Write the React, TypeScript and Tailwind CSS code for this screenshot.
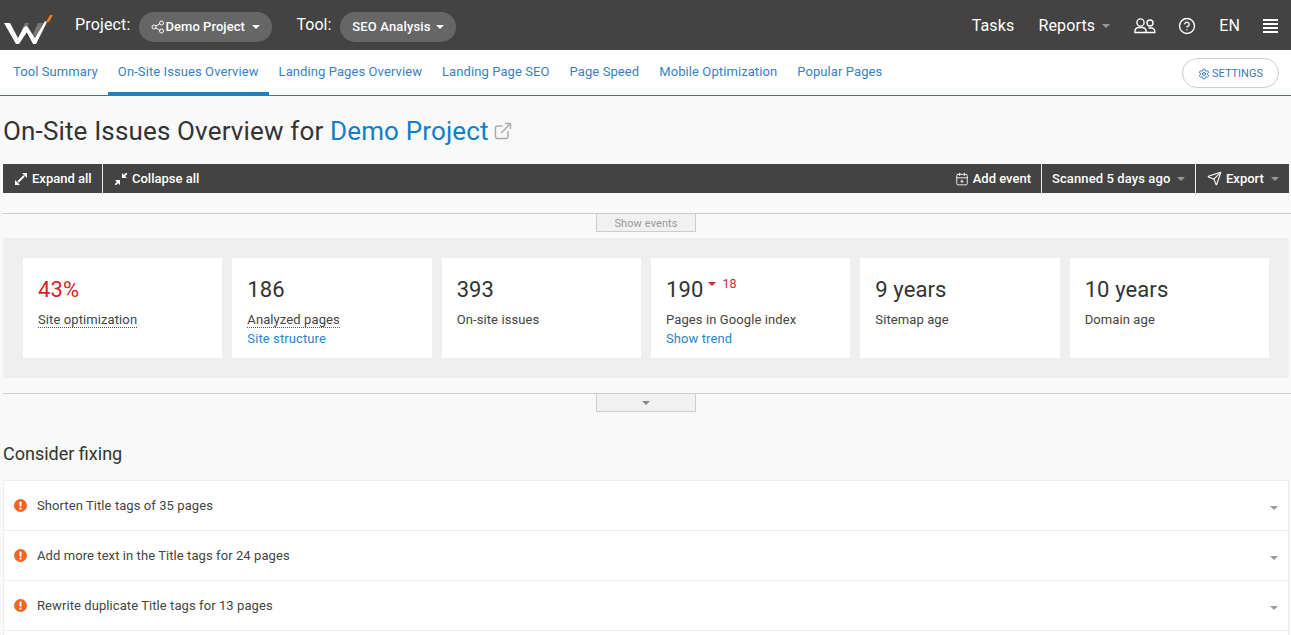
import React from 'react';
import { Settings, ExternalLink, CircleHelp, CalendarPlus2, Send } from 'lucide-react';

const Caret = ({ className = 'border-t-white' }: { className?: string }) => (
  <span className={`inline-block w-0 h-0 border-x-[4px] border-x-transparent border-t-[4px] ${className}`} />
);

const Logo = () => (
  <svg width="54" height="40" viewBox="0 0 54 40" className="block">
    <path d="M20 29 L25 18 L29 18 L23 32 Z" fill="#777" />
    <path d="M33 29 L38 18 L43 18 L36 32 Z" fill="#777" />
    <path d="M4 18 H10 L18 33 L24 22 L27 27 L19 39 H16 Z" fill="#fff" />
    <path d="M24 22 L27 21 L35 33 L45 16 L47 17 L36 39 H33 Z" fill="#fff" />
    <path d="M46 17 L50 10 H53 L49 17 Z" fill="#f47b20" />
  </svg>
);

const tabs = ['Tool Summary', 'On-Site Issues Overview', 'Landing Pages Overview', 'Landing Page SEO', 'Page Speed', 'Mobile Optimization', 'Popular Pages'];

const issues = ['Shorten Title tags of 35 pages', 'Add more text in the Title tags for 24 pages', 'Rewrite duplicate Title tags for 13 pages'];

const Stat = ({ value, label, link, dotted, red, delta }: { value: string; label: string; link?: string; dotted?: boolean; red?: boolean; delta?: string }) => (
  <div className="flex-1 bg-white h-[100px] pl-[15px] pt-[18px]">
    <div className="flex items-start h-[28px]">
      <span className={`text-[22px] leading-[28px] tracking-[0.1px] ${red ? 'text-[#d9222a]' : 'text-[#333]'}`}>{value}</span>
      {delta && (
        <span className="flex items-center ml-[5px] text-[12.5px] leading-[16px] text-[#d9222a]">
          <Caret className="border-t-[#d9222a] mr-[6px]" />
          {delta}
        </span>
      )}
    </div>
    <div className="mt-[6px] text-[13px] leading-[19px] tracking-[0.1px] text-[#444]">
      <span className={dotted ? 'border-b border-dotted border-[#555]' : ''}>{label}</span>
    </div>
    {link && <div className="text-[13px] leading-[19px] tracking-[0.1px] text-[#2a85c9]">{link}</div>}
  </div>
);

export default function App() {
  return (
    <div className="h-[635px] overflow-hidden bg-[#f9f9f9] font-['Roboto',sans-serif]">
      {/* top bar */}
      <header className="h-[50px] bg-[#434343] flex items-center text-white">
        <div className="w-[75px] shrink-0"><Logo /></div>
        <span className="text-[16px] tracking-[0.15px]">Project:</span>
        <button className="ml-[9px] mt-[4px] h-[30px] w-[133px] rounded-full bg-[#666] flex items-center pl-[12px] text-[13px] font-medium tracking-[0.05px]">
          <svg width="14" height="14" viewBox="0 0 14 14" fill="none" stroke="#fff" strokeWidth="1">
            <circle cx="3" cy="7" r="2" />
            <circle cx="10.5" cy="3" r="2" />
            <circle cx="10.5" cy="11" r="2" />
            <path d="M4.8 6L8.7 4M4.8 8l3.9 2" />
          </svg>
          Demo Project
          <Caret className="ml-[7px]" />
        </button>
        <span className="ml-[24px] text-[16px]">Tool:</span>
        <button className="ml-[9px] mt-[4px] h-[30px] w-[116px] rounded-full bg-[#666] flex items-center pl-[12px] text-[13px] font-medium tracking-[0.15px]">
          SEO Analysis
          <Caret className="ml-[5px]" />
        </button>
        <div className="ml-auto pt-[1px] flex items-center text-[16px] tracking-[0.15px]">
          <span>Tasks</span>
          <span className="ml-[24px]">Reports</span>
          <Caret className="ml-[7px] border-t-[#999]" />
          <svg width="22" height="17" viewBox="0 0 22 17" className="ml-[24px] -mt-[1px]" fill="none" stroke="#fff" strokeWidth="1.4">
            <circle cx="6.5" cy="5.5" r="3.6" />
            <path d="M1 15.5v-1.5A3.5 3.5 0 0 1 4.5 10.5h4A3.5 3.5 0 0 1 12 14v1.5Z" />
            <circle cx="16" cy="6" r="3" />
            <path d="M14.5 11h2.5A3.5 3.5 0 0 1 20.8 14.2v1.3H12" />
          </svg>
          <CircleHelp size={18} strokeWidth={1.8} className="ml-[22px]" />
          <span className="ml-[23px]">EN</span>
          <span className="ml-[23px] mr-[13px] w-[15px] h-[14px] flex flex-col justify-between">
            <i className="block h-[2px] bg-white" />
            <i className="block h-[2px] bg-white" />
            <i className="block h-[2px] bg-white" />
            <i className="block h-[2px] bg-white" />
          </span>
        </div>
      </header>

      {/* tabs */}
      <nav className="h-[46px] bg-white border-b border-[#2f7cb0] flex items-stretch pl-[3px] pr-[12px] text-[13px] text-[#3a7fc0]">
        {tabs.map((t, i) => (
          <a key={t} className={`px-[10px] pt-[12px] tracking-[0.09px] ${i === 1 ? 'border-b-[3px] border-[#1f80c0]' : ''}`}>{t}</a>
        ))}
        <button className="ml-auto self-center h-[30px] w-[97px] rounded-full border border-[#ccc] flex items-center justify-center pt-[3px] text-[11px] text-[#2f7cb8]">
          <Settings size={12} className="mr-[2px]" />
          SETTINGS
        </button>
      </nav>

      <main className="pl-[3px] pr-[2px]">
        <h1 className="mt-[18px] h-[34px] flex items-center text-[26px] tracking-[0.15px] text-[#333] leading-[34px]">
          On-Site Issues Overview for&nbsp;<span className="text-[#0f7fc7]">Demo Project</span>
          <ExternalLink size={20} strokeWidth={1.75} className="ml-[4px] text-[#aaa]" />
        </h1>

        {/* toolbar */}
        <div className="mt-[16px] h-[29px] bg-[#434343] text-white text-[13px] font-medium flex items-stretch whitespace-nowrap">
          <span className="flex items-center pl-[12px] border-r border-[#eee] w-[100px]">
            <svg width="12" height="12" viewBox="0 0 12 12" className="mr-[5px] shrink-0" fill="#fff">
              <path d="M3 9L9 3" stroke="#fff" strokeWidth="1.8" />
              <path d="M12 0V5L7 0ZM0 12V7L5 12Z" />
            </svg>
            Expand all
          </span>
          <span className="flex items-center pl-[12px]">
            <svg width="12" height="12" viewBox="0 0 12 12" className="mr-[5px] shrink-0" fill="#fff">
              <path d="M0 12L4 8M8 4L12 0" stroke="#fff" strokeWidth="1.8" />
              <path d="M7 5H12L7 0ZM5 7H0L5 12Z" />
            </svg>
            Collapse all
          </span>
          <span className="ml-auto flex items-center pr-[10px] border-r border-[#eee]">
            <CalendarPlus2 size={14} strokeWidth={1.5} className="mr-[4px]" />
            Add event
          </span>
          <span className="flex items-center pl-[10px] w-[154px] tracking-[0.1px] border-r border-[#eee]">
            Scanned 5 days ago
            <Caret className="ml-[7px] border-t-[#999]" />
          </span>
          <span className="flex items-center pl-[11px] w-[93px]">
            <Send size={15} strokeWidth={1.75} className="mr-[4px]" />
            Export
            <Caret className="ml-[7px] border-t-[#999]" />
          </span>
        </div>

        {/* events toggle */}
        <div className="mt-[20px] h-[19px] border-t border-[#ccc] -mr-[2px] flex justify-center pr-[2px]">
          <div className="w-[100px] h-[19px] -mt-px border border-[#ccc] bg-[#f1f1f1] text-[11px] leading-[19px] tracking-[0.1px] text-center text-[#999]">Show events</div>
        </div>

        {/* stats */}
        <section className="mt-[6px] h-[140px] bg-[#efefef] p-[20px] flex gap-[10px]">
          <Stat value="43%" label="Site optimization" dotted red />
          <Stat value="186" label="Analyzed pages" link="Site structure" dotted />
          <Stat value="393" label="On-site issues" />
          <Stat value="190" label="Pages in Google index" link="Show trend" delta="18" />
          <Stat value="9 years" label="Sitemap age" />
          <Stat value="10 years" label="Domain age" />
        </section>

        <div className="mt-[15px] h-[19px] border-t border-[#ccc] -mr-[2px] flex justify-center pr-[2px]">
          <div className="w-[100px] h-[19px] -mt-px border border-[#ccc] bg-[#f1f1f1] flex items-center justify-center">
            <Caret className="border-t-[#888]" />
          </div>
        </div>

        <h2 className="mt-[30px] text-[18px] leading-[24px] text-[#333]">Consider fixing</h2>

        {/* issues */}
        <div className="mt-[14px] border border-[#eee] border-b-0 bg-white h-[200px]">
          {issues.map((t) => (
            <div key={t} className="h-[50px] border-b border-[#eee] flex items-center pl-[10px] pr-[10px] text-[13px] text-[#444] tracking-[0.08px]">
              <svg width="13" height="13" viewBox="0 0 13 13" className="mr-[10px]">
                <circle cx="6.5" cy="6.5" r="6.5" fill="#f26522" />
                <rect x="5.5" y="2.6" width="2" height="5" rx="0.6" fill="#fff" />
                <rect x="5.5" y="8.6" width="2" height="2" rx="0.6" fill="#fff" />
              </svg>
              {t}
              <Caret className="ml-auto border-t-[#999] mt-[4px]" />
            </div>
          ))}
        </div>
      </main>
    </div>
  );
}
